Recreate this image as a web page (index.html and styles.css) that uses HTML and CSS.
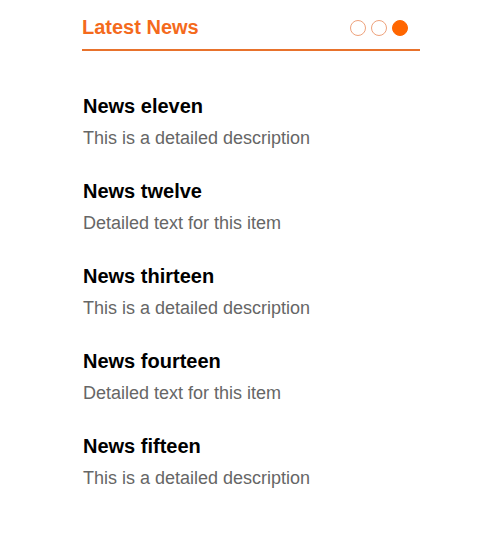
FILE: index.html
```html
<!DOCTYPE html>
<html lang="en">
<head>
<meta charset="utf-8">
<title>Latest News</title>
<link rel="stylesheet" href="styles.css">
</head>
<body>
<section class="widget">
  <header class="widget-header">
    <h2 class="widget-title">Latest News</h2>
    <div class="pager">
      <span class="dot"></span>
      <span class="dot"></span>
      <span class="dot active"></span>
    </div>
  </header>
  <ul class="news-list">
    <li class="news-item">
      <h3 class="news-title">News eleven</h3>
      <p class="news-desc">This is a detailed description</p>
    </li>
    <li class="news-item">
      <h3 class="news-title">News twelve</h3>
      <p class="news-desc">Detailed text for this item</p>
    </li>
    <li class="news-item">
      <h3 class="news-title">News thirteen</h3>
      <p class="news-desc">This is a detailed description</p>
    </li>
    <li class="news-item">
      <h3 class="news-title">News fourteen</h3>
      <p class="news-desc">Detailed text for this item</p>
    </li>
    <li class="news-item">
      <h3 class="news-title">News fifteen</h3>
      <p class="news-desc">This is a detailed description</p>
    </li>
  </ul>
</section>
</body>
</html>
```
FILE: styles.css
```css
html, body {
  margin: 0;
  padding: 0;
  background: #ffffff;
}
body {
  font-family: "Liberation Sans", Arial, sans-serif;
}
.widget {
  width: 338px;
  margin-left: 82px;
  padding-top: 16px;
}
.widget-header {
  display: flex;
  align-items: center;
  justify-content: space-between;
  padding-bottom: 10px;
  border-bottom: 2px solid #e8722c;
}
.widget-title {
  margin: 0;
  font-size: 20px;
  line-height: 23px;
  font-weight: bold;
  color: #f46a1c;
}
.pager {
  display: flex;
  gap: 5px;
  margin-right: 12px;
}
.dot {
  width: 16px;
  height: 16px;
  box-sizing: border-box;
  border-radius: 50%;
  border: 1px solid #eea27c;
  background: #fff;
}
.dot.active {
  background: #ff6600;
  border-color: #ff6600;
}
.news-list {
  list-style: none;
  margin: 0;
  padding: 44px 0 0 1px;
  display: flex;
  flex-direction: column;
  gap: 31px;
}
.news-item {
  display: flex;
  flex-direction: column;
  gap: 10px;
}
.news-title {
  margin: 0;
  font-size: 20px;
  line-height: 23px;
  font-weight: bold;
  color: #000;
}
.news-desc {
  margin: 0;
  font-size: 18px;
  line-height: 21px;
  color: #666666;
}
```
